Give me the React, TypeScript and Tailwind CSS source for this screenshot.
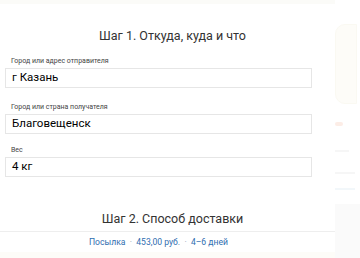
import React from 'react';

const Field: React.FC<{ label: string; value: string; className?: string }> = ({ label, value, className }) => (
  <div className={`flex flex-col ${className ?? ''}`}>
    <label className="pl-[6px] text-[7px] leading-[10px] text-[#444]">{label}</label>
    <div className="mt-[2px] h-[20px] border border-[#e6e6e6] bg-white pl-[6px] flex items-center text-[11.5px] text-[#000]">
      {value}
    </div>
  </div>
);

export default function App() {
  return (
    <div
      className="relative w-[360px] h-[258px] overflow-hidden bg-white flex"
      style={{ fontFamily: 'Roboto, "Liberation Sans", sans-serif' }}
    >
      {/* main column */}
      <div className="w-[335px] flex flex-col">
        <div className="h-[4px] bg-[#fbfbf8]" />
        <h2 className="mt-[24px] w-[345px] text-center text-[12.5px] leading-[16px] text-[#333]">
          Шаг 1. Откуда, куда и что
        </h2>
        <div className="mt-[12px] pl-[5px] w-[312px] flex flex-col">
          <Field label="Город или адрес отправителя" value="г Казань" />
          <Field className="mt-[14px]" label="Город или страна получателя" value="Благовещенск" />
          <Field className="mt-[11px]" label="Вес" value="4 кг" />
        </div>
        <h2 className="mt-[34px] w-[345px] text-center text-[12.5px] leading-[16px] text-[#333]">
          Шаг 2. Способ доставки
        </h2>
        <div className="mt-[4px] border-t border-[#eeeeee] h-[21px] w-[335px] flex items-center">
          <div className="w-[317px] text-center text-[8.6px] text-[#2f6db0]">
            Посылка <span className="text-[#8fa3b8]">&nbsp;·&nbsp;</span> 453,00 руб.{' '}
            <span className="text-[#8fa3b8]">&nbsp;·&nbsp;</span> 4–6 дней
          </div>
        </div>
        <div className="flex-1 bg-[#fdfcf8]" />
      </div>

      {/* faded sidebar */}
      <div className="flex-1 flex flex-col pt-[24px] opacity-25">
        <div className="h-[80px] w-[22px] rounded-l-[10px] bg-[#faf6e6] border border-[#eee8cc]" />
        <div className="mt-[18px] h-[4px] w-[8px] rounded bg-[#f7b9a0]" />
        <div className="mt-[24px] h-[2px] w-[14px] bg-[#ddd]" />
        <div className="mt-[20px] h-[2px] w-[20px] bg-[#ddd]" />
        <div className="mt-[14px] h-[2px] w-[20px] bg-[#cfe0ee]" />
        <div className="mt-[14px] flex-1 bg-[#eeeeee]" />
      </div>
    </div>
  );
}
